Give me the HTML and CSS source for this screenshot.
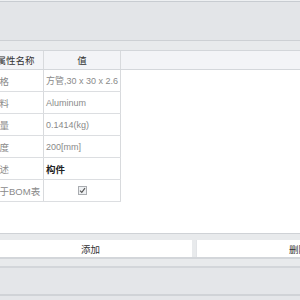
FILE: index.html
```html
<!DOCTYPE html>
<html lang="zh">
<head>
  <meta charset="UTF-8">
  <title>属性</title>
  <link rel="stylesheet" href="styles.css">
</head>
<body>
  <div class="panel">
    <div class="topbar"></div>
    <div class="toolbar-band"></div>

    <div class="grid">
      <div class="grid-head">
        <div class="cell name head">属性名称</div>
        <div class="cell value head">值</div>
        <div class="head-rest"></div>
      </div>
      <div class="grid-body">
        <div class="row">
          <div class="cell name">规格</div>
          <div class="cell value">方管,30 x 30 x 2.6</div>
        </div>
        <div class="row">
          <div class="cell name">材料</div>
          <div class="cell value">Aluminum</div>
        </div>
        <div class="row">
          <div class="cell name">质量</div>
          <div class="cell value">0.1414(kg)</div>
        </div>
        <div class="row">
          <div class="cell name">长度</div>
          <div class="cell value">200[mm]</div>
        </div>
        <div class="row">
          <div class="cell name">描述</div>
          <div class="cell value strong">构件</div>
        </div>
        <div class="row">
          <div class="cell name">用于BOM表</div>
          <div class="cell value center">
            <span class="check">
              <svg width="7" height="7" viewBox="0 0 7 7"><path d="M1 3.6 L2.8 5.4 L6 1.2" fill="none" stroke="#555" stroke-width="1.1"/></svg>
            </span>
          </div>
        </div>
      </div>
    </div>

    <div class="buttons">
      <div class="button-row">
        <div class="button">添加</div>
        <div class="button">删除</div>
      </div>
    </div>
    <div class="footer"></div>
  </div>
</body>
</html>
```

FILE: styles.css
```css
body {
  margin: 0;
  width: 300px;
  height: 300px;
  overflow: hidden;
  background: #e4e6e9;
  font-family: "Liberation Sans", "Noto Sans CJK SC", sans-serif;
  font-size: 9.5px;
}

.panel {
  margin-left: -12px;
  width: 412px;
  display: flex;
  flex-direction: column;
}

.topbar {
  height: 39px;
  border-top: 1px solid #eef0f2;
  box-shadow: inset 0 1px 0 #c8ccd1;
  background: #e3e5e8;
  border-bottom: 1px solid #cdd0d4;
}

.toolbar-band {
  height: 9px;
  background: #e8eaec;
  border-bottom: 1px solid #d3d6da;
}

.grid {
  height: 182px;
  background: #fff;
}

.grid-head {
  display: flex;
  height: 18px;
  background: #f3f4f7;
  border-bottom: 1px solid #d4d7db;
}

.grid-body {
  width: 133px;
}

.row {
  display: flex;
  height: 21px;
  border-bottom: 1px solid #dcdee1;
}

.cell {
  display: flex;
  align-items: center;
  padding: 0 2px;
  color: #8a8a8a;
  border-right: 1px solid #d8dadd;
  white-space: nowrap;
  overflow: hidden;
}

.cell.name {
  width: 51px;
}

.cell.value {
  width: 72px;
  font-size: 9px;
}

.cell.head {
  justify-content: center;
  color: #333;
  font-size: 9.5px;
}

.head-rest {
  flex: 1;
}

.cell.strong {
  color: #222;
  font-weight: bold;
  font-size: 9.5px;
}

.cell.center {
  justify-content: center;
}

.check {
  display: flex;
  align-items: center;
  justify-content: center;
  width: 7px;
  height: 7px;
  border: 1px solid #a9acb0;
  background: #eef0f2;
}

.buttons {
  border-top: 1px solid #cfd2d6;
  background: #e8eaec;
  padding: 6px 0 7px;
  border-bottom: 2px solid #d3d6da;
}

.button-row {
  display: flex;
  gap: 4px;
  border-bottom: 2px solid #d3d6da;
}

.button {
  width: 204px;
  height: 17px;
  display: flex;
  align-items: center;
  justify-content: center;
  background: #fff;
  color: #333;
  border-left: 1px solid #e2e4e7;
}

.footer {
  height: 26px;
  background: #e4e6e9;
  border-bottom: 2px solid #d0d3d7;
}
```
